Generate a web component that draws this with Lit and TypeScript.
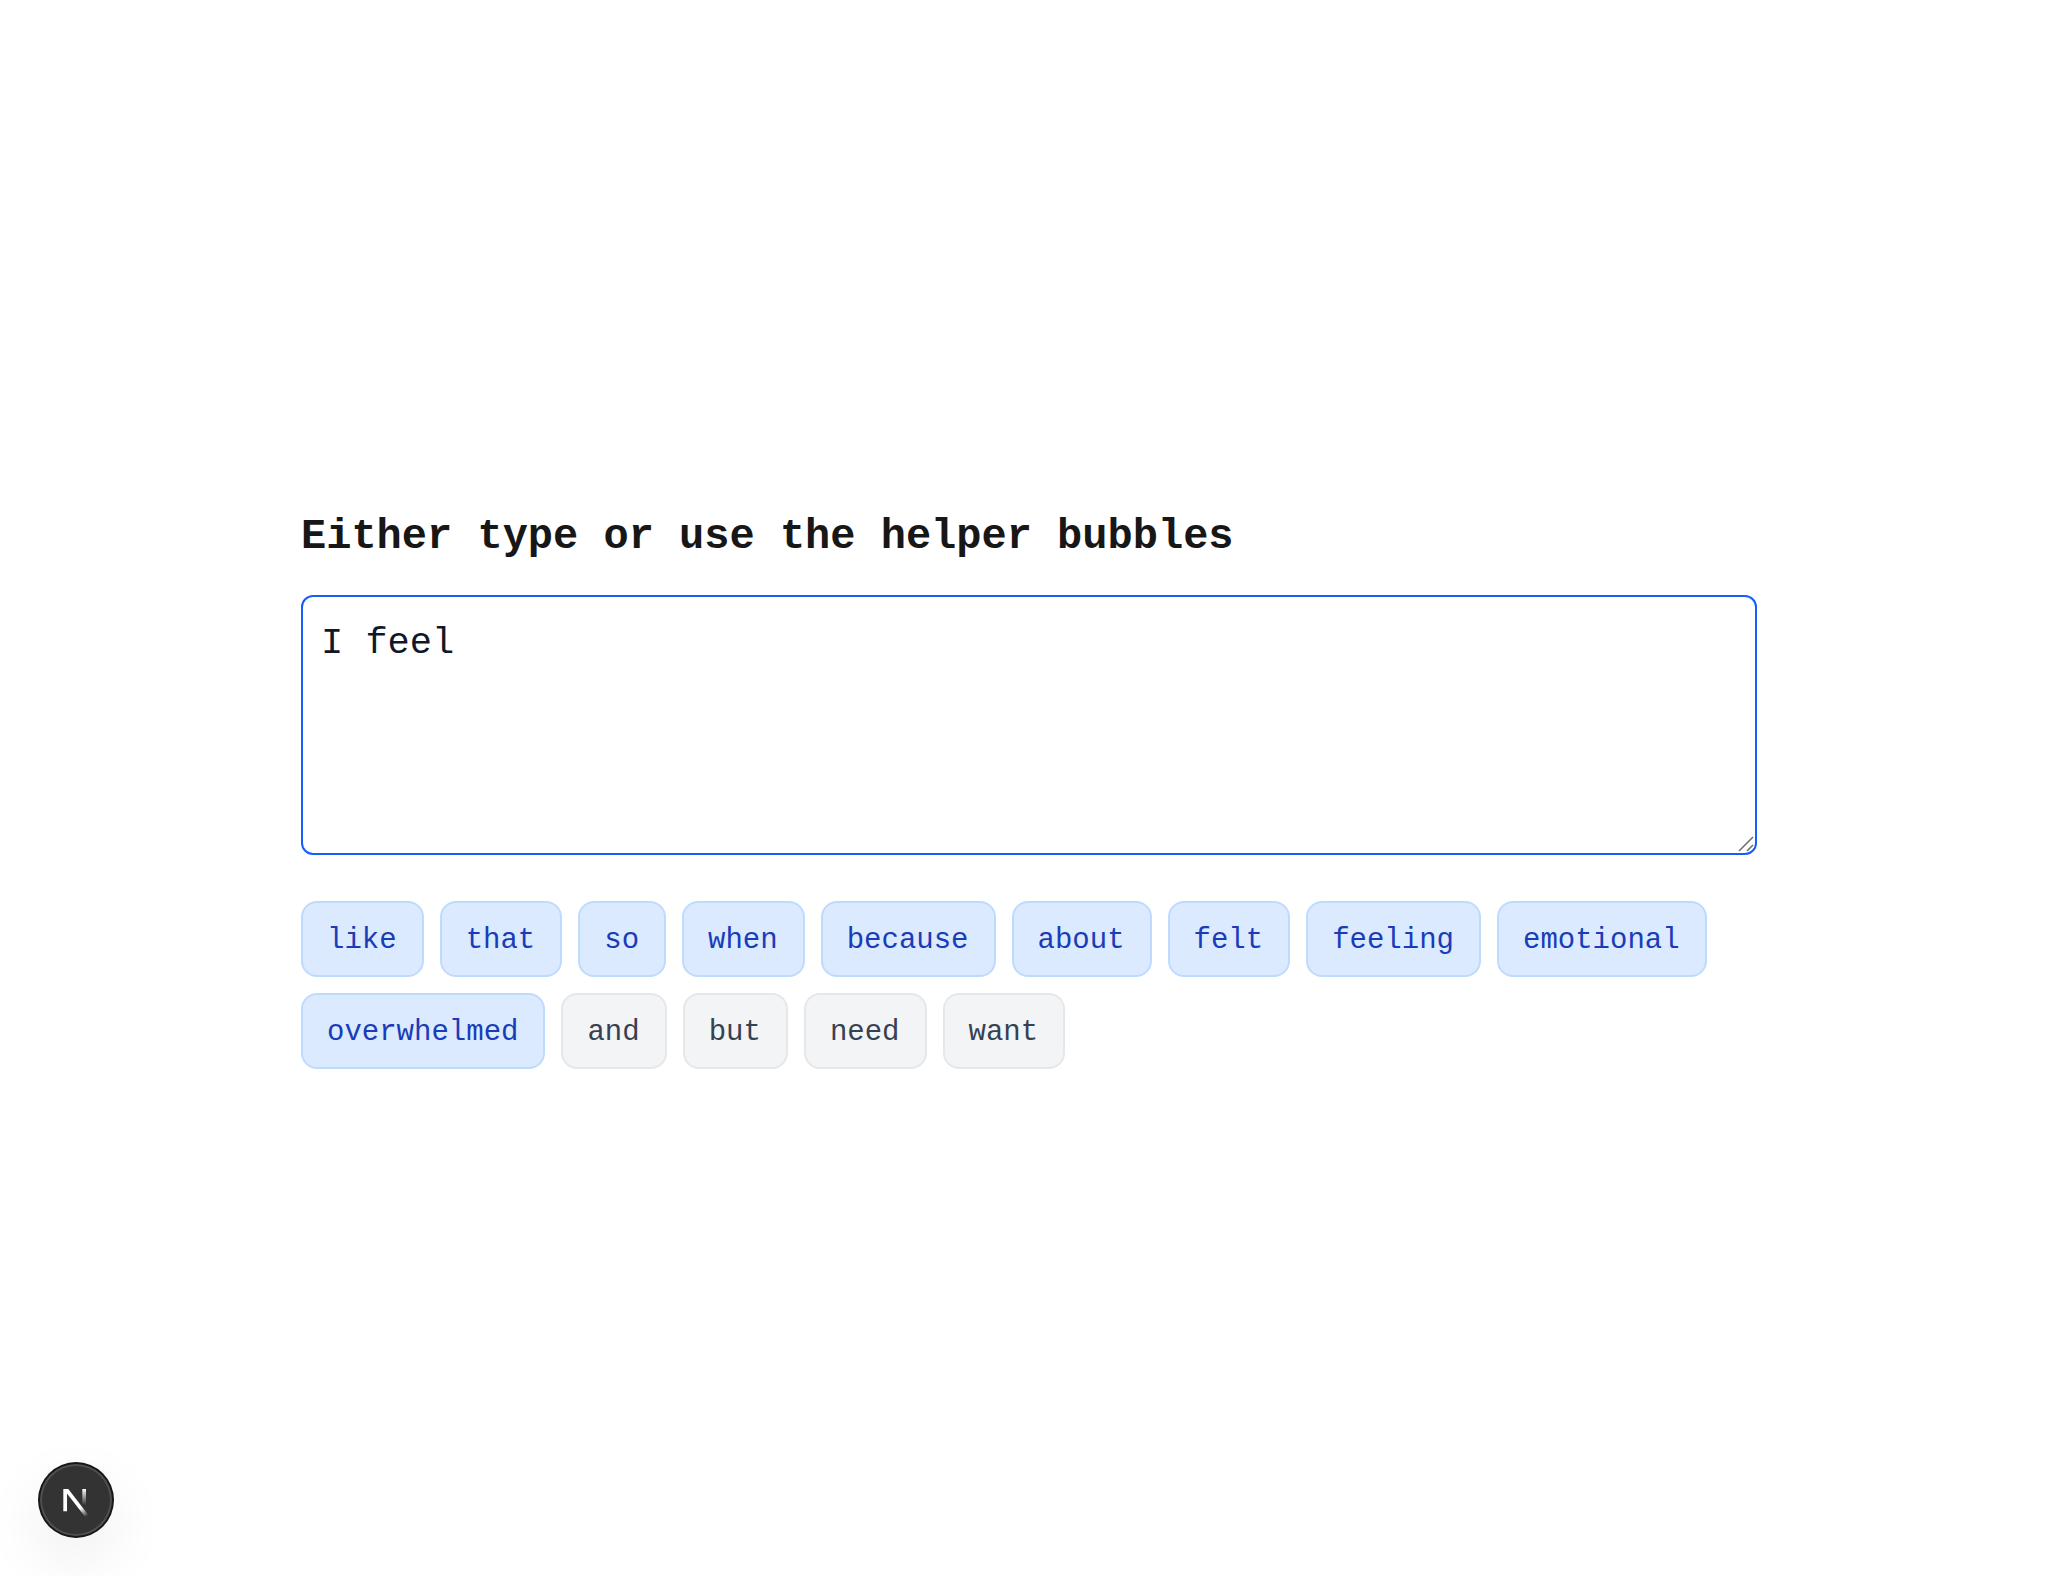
import { LitElement, html, css } from "lit";
import { customElement, state } from "lit/decorators.js";
import { classMap } from "lit/directives/class-map.js";

interface Bubble {
  word: string;
  suggested: boolean;
}

const BUBBLES: Bubble[] = [
  ...["like", "that", "so", "when", "because", "about", "felt", "feeling", "emotional", "overwhelmed"].map(
    (word) => ({ word, suggested: true }),
  ),
  ...["and", "but", "need", "want"].map((word) => ({ word, suggested: false })),
];

@customElement("dev-badge")
export class DevBadge extends LitElement {
  static styles = css`
    :host {
      display: block;
    }
    .badge {
      display: block;
      width: 72px;
      height: 72px;
      padding: 0;
      border: 0;
      border-radius: 50%;
      background: #333333;
      box-shadow:
        0 0 0 2px #171717,
        inset 0 0 0 2px rgba(255, 255, 255, 0.14),
        0 24px 64px 0 rgba(0, 0, 0, 0.08);
      cursor: pointer;
    }
    .mark {
      display: block;
      width: 72px;
      height: 72px;
    }
  `;

  render() {
    return html`
      <button class="badge" type="button" aria-label="Open developer tools">
        <svg class="mark" viewBox="0 0 36 36" fill="none" aria-hidden="true">
          <defs>
            <linearGradient id="diagonal" x1="9.95" y1="11.13" x2="15.17" y2="17.96" gradientUnits="userSpaceOnUse">
              <stop stop-color="white" />
              <stop offset="0.604" stop-color="white" stop-opacity="0" />
              <stop offset="1" stop-color="white" stop-opacity="0" />
            </linearGradient>
            <linearGradient id="stem" x1="11.82" y1="1.4" x2="11.79" y2="9.63" gradientUnits="userSpaceOnUse">
              <stop stop-color="white" />
              <stop offset="1" stop-color="white" stop-opacity="0" />
            </linearGradient>
            <clipPath id="trim">
              <rect x="0" y="1.5" width="15" height="15" />
            </clipPath>
          </defs>
          <g transform="translate(10.25 11)" stroke-width="1.86" clip-path="url(#trim)">
            <path d="M13.3 15.2 L2.34 1 V12.6" stroke="url(#diagonal)" />
            <path d="M11.825 1.5 V13.1" stroke="url(#stem)" />
          </g>
        </svg>
      </button>
    `;
  }
}

@customElement("app-root")
export class AppRoot extends LitElement {
  static styles = css`
    :host {
      display: block;
      background: #ffffff;
      color: #171717;
      font-family: "Liberation Mono", "Courier New", monospace;
    }
    *,
    *::before,
    *::after {
      box-sizing: border-box;
    }
    .page {
      display: flex;
      flex-direction: column;
      align-items: center;
      justify-content: center;
      min-height: 100vh;
      padding: 32px;
    }
    .composer {
      width: 100%;
      max-width: 1456px;
    }
    .title {
      display: block;
      margin: 0 0 28px;
      font-size: 42px;
      line-height: 60px;
      font-weight: 700;
    }
    .field {
      position: relative;
      margin-bottom: 46px;
    }
    .input {
      display: block;
      width: 100%;
      height: 260px;
      margin: 0;
      padding: 18px;
      border: 2px solid #155dfc;
      border-radius: 12px;
      outline: none;
      background: #ffffff;
      color: #0f172a;
      font-family: inherit;
      font-size: 37px;
      line-height: 56px;
      resize: vertical;
    }
    .input::-webkit-resizer {
      display: none;
    }
    .grip {
      position: absolute;
      right: 2px;
      bottom: 2px;
      width: 20px;
      height: 20px;
      pointer-events: none;
    }
    .bubbles {
      display: flex;
      flex-wrap: wrap;
      gap: 16px;
    }
    .bubble {
      padding: 18px 25px 14px 24px;
      border: 2px solid #e5e7eb;
      border-radius: 16px;
      background: #f3f4f6;
      color: #364153;
      font-family: inherit;
      font-size: 29px;
      line-height: 40px;
      cursor: pointer;
    }
    .suggested {
      border-color: #bedbff;
      background: #dbeafe;
      color: #193cb8;
    }
    .dev {
      position: fixed;
      left: 40px;
      bottom: 40px;
    }
  `;

  @state() private text = "I feel ";

  private onInput(event: Event) {
    this.text = (event.target as HTMLTextAreaElement).value;
  }

  private append(word: string) {
    const gap = this.text === "" || this.text.endsWith(" ") ? "" : " ";
    this.text = `${this.text}${gap}${word} `;
  }

  render() {
    return html`
      <main class="page">
        <section class="composer">
          <h1 class="title"><label for="entry">Either type or use the helper bubbles</label></h1>
          <div class="field">
            <textarea id="entry" class="input" spellcheck="false" .value=${this.text} @input=${this.onInput}></textarea>
            <svg class="grip" viewBox="0 0 20 20" fill="none" stroke="#6b6b6b" stroke-width="1.5" aria-hidden="true">
              <path d="M4 18 L18 4 M12 18 L18 12" />
            </svg>
          </div>
          <div class="bubbles">
            ${BUBBLES.map(
              ({ word, suggested }) => html`
                <button
                  type="button"
                  class=${classMap({ bubble: true, suggested })}
                  @click=${() => this.append(word)}
                >${word}</button>
              `,
            )}
          </div>
        </section>
      </main>
      <dev-badge class="dev"></dev-badge>
    `;
  }
}
